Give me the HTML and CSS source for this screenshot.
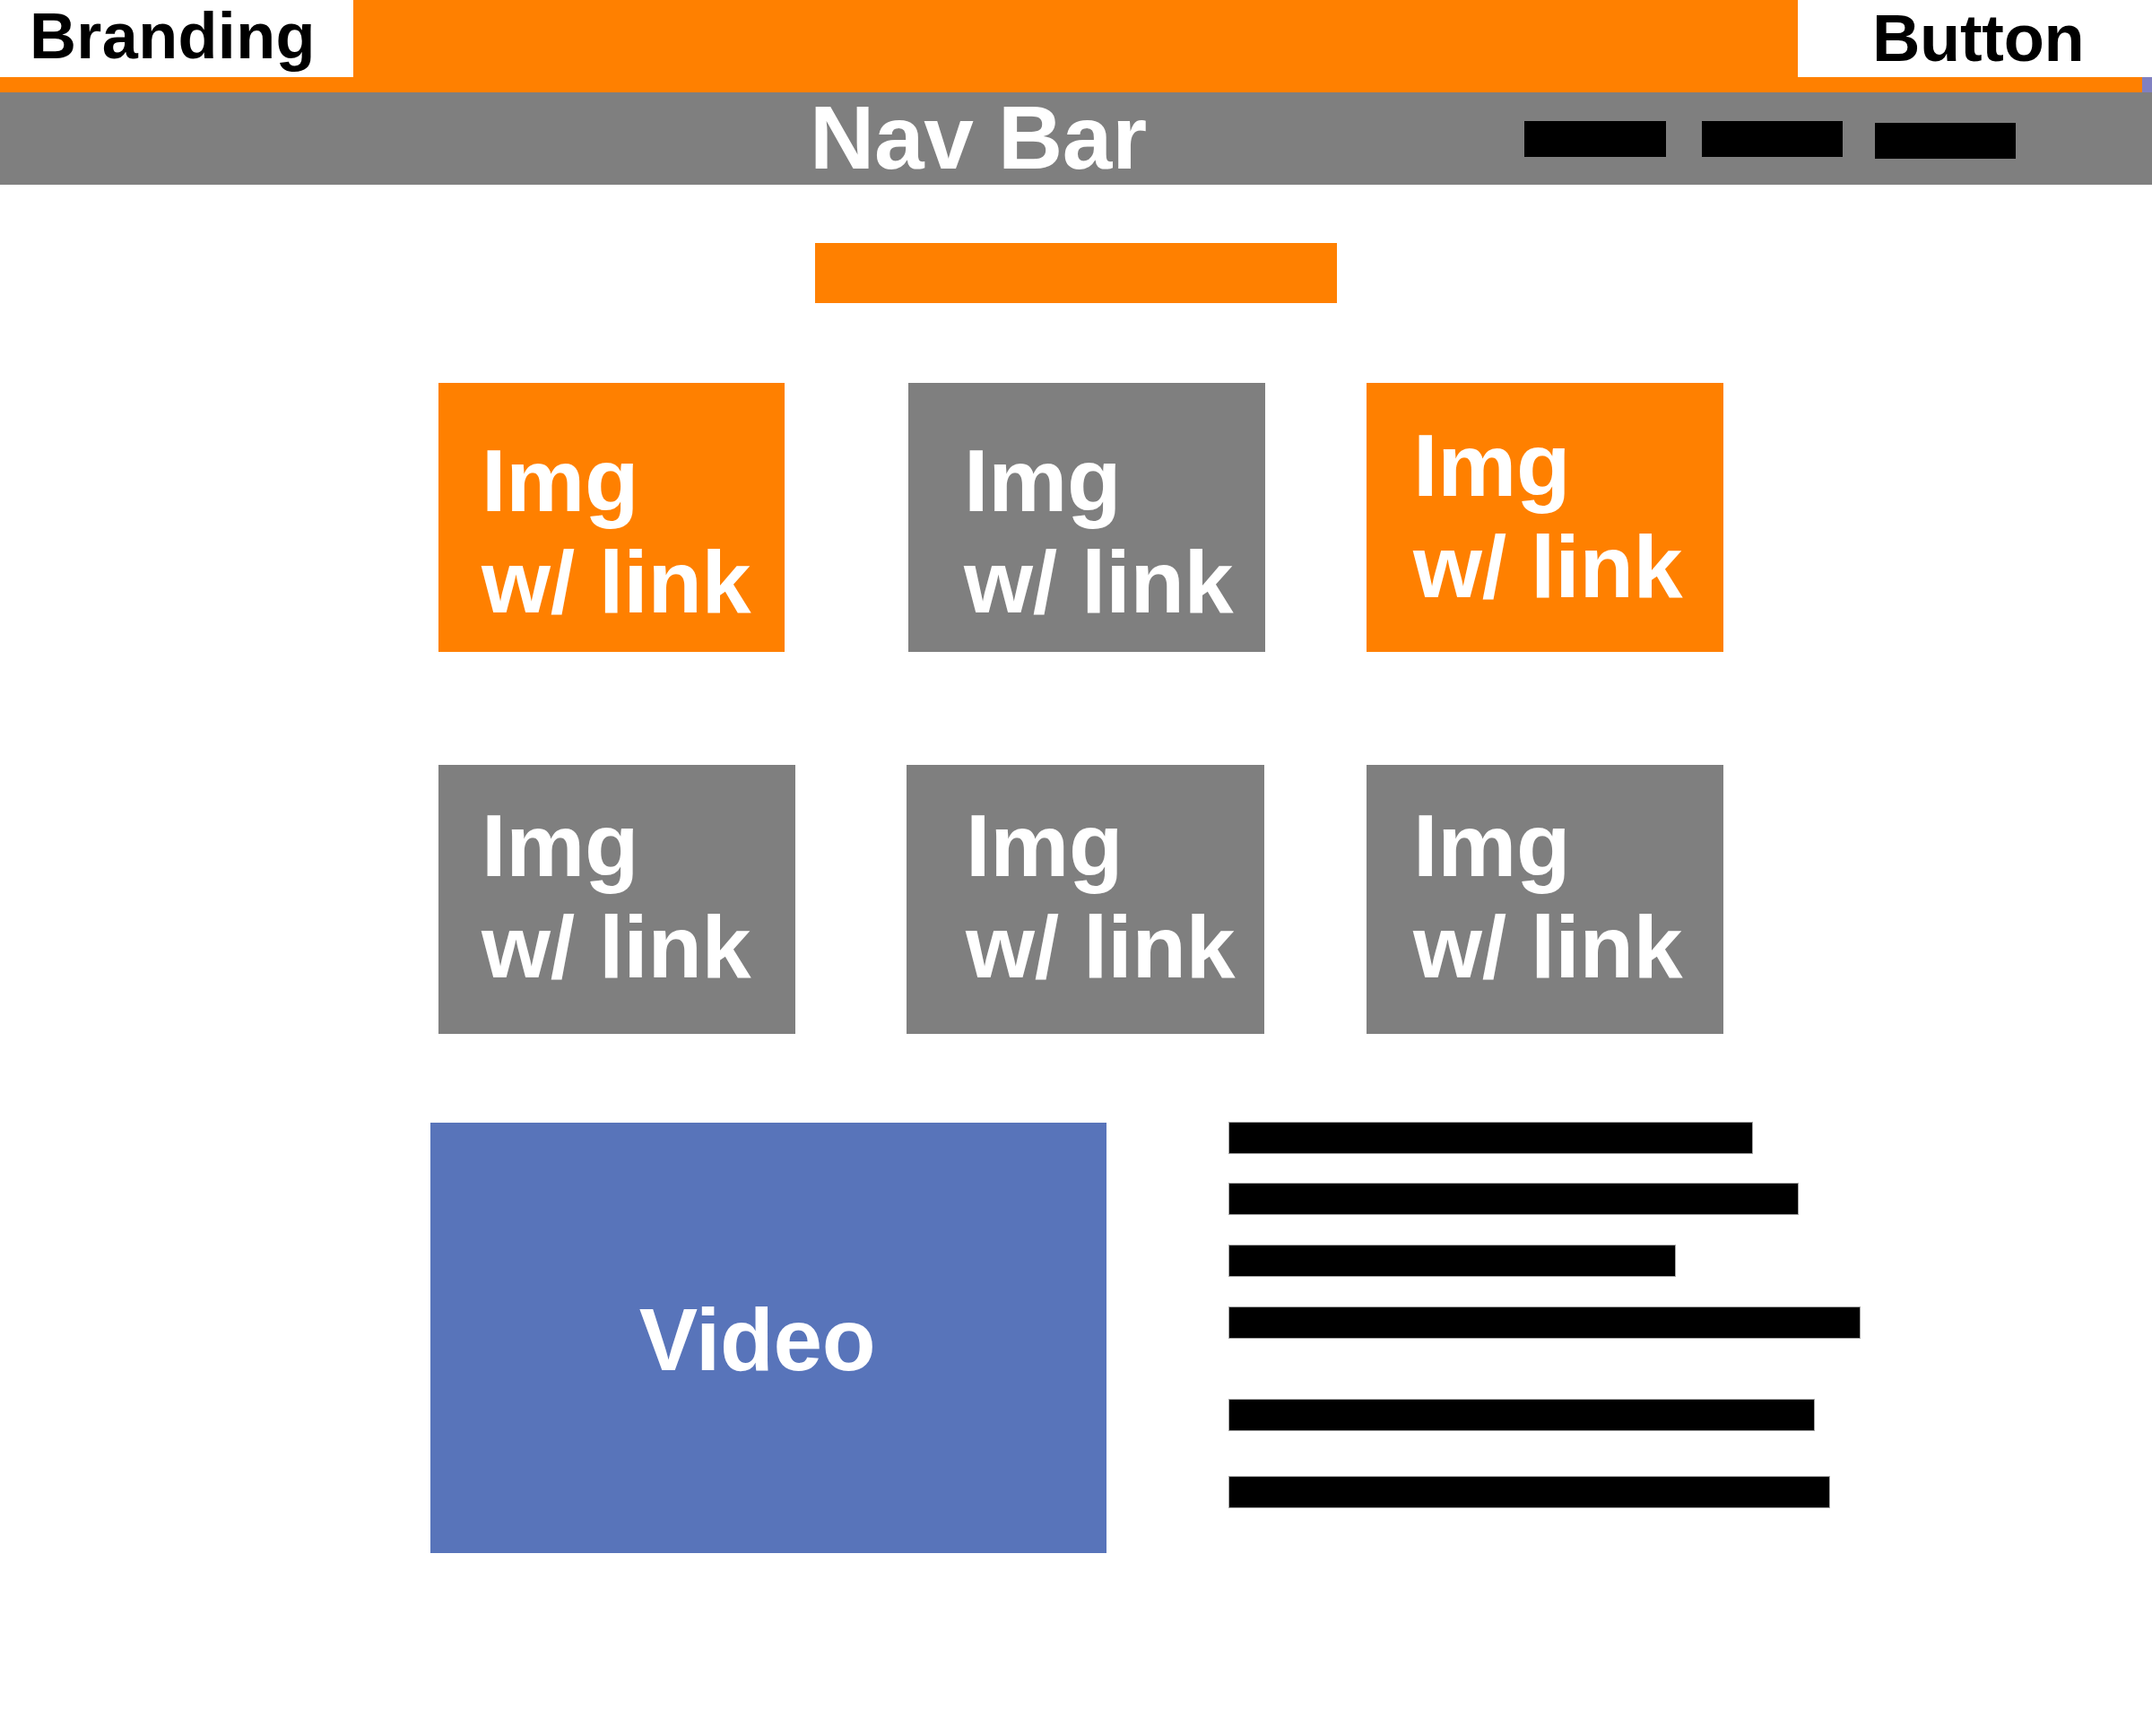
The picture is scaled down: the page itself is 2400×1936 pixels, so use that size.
FILE: index.html
```html
<!DOCTYPE html>
<html lang="en">
<head>
<meta charset="utf-8">
<title>Wireframe</title>
<link rel="stylesheet" href="styles.css">
</head>
<body>
<header class="top">
  <div class="top-row">
    <div class="brand">Branding</div>
    <div class="top-fill"></div>
    <div class="btn">Button</div>
  </div>
  <div class="strip"><div class="strip-end"></div></div>
</header>
<nav class="nav">
  <div class="nav-title">Nav Bar</div>
  <div class="nav-links">
    <span class="nav-link l1"></span>
    <span class="nav-link l2"></span>
    <span class="nav-link l3"></span>
  </div>
</nav>
<main class="main">
  <div class="hero-bar"></div>
  <div class="row row1">
    <a class="card orange c1">Img<br>w/ link</a>
    <a class="card gray c2">Img<br>w/ link</a>
    <a class="card orange c3">Img<br>w/ link</a>
  </div>
  <div class="row row2">
    <a class="card gray c4">Img<br>w/ link</a>
    <a class="card gray c5">Img<br>w/ link</a>
    <a class="card gray c6">Img<br>w/ link</a>
  </div>
  <section class="media">
    <div class="video"><span>Video</span></div>
    <div class="lines">
      <div class="line t1"></div>
      <div class="line t2"></div>
      <div class="line t3"></div>
      <div class="line t4"></div>
      <div class="line t5"></div>
      <div class="line t6"></div>
    </div>
  </section>
</main>
</body>
</html>
```
FILE: styles.css
```css
* { box-sizing: border-box; }
html, body { margin: 0; padding: 0; }
body {
  width: 2400px;
  min-height: 1936px;
  background: #ffffff;
  font-family: "Liberation Sans", Arial, sans-serif;
  font-weight: bold;
  letter-spacing: -0.02em;
  overflow: hidden;
}

/* header */
.top-row {
  display: flex;
  height: 86px;
  background: #ff8000;
}
.brand {
  width: 394px;
  background: #ffffff;
  color: #000;
  font-size: 72px;
  line-height: 1.117;
  letter-spacing: 0.005em;
  padding-left: 33px;
  white-space: nowrap;
}
.top-fill { flex: 1; }
.btn {
  width: 395px;
  background: #ffffff;
  color: #000;
  font-size: 74px;
  line-height: 74px;
  padding: 6px 0 0 83px;
  white-space: nowrap;
}
.strip {
  height: 17px;
  background: #ff8000;
  display: flex;
  justify-content: flex-end;
}
.strip-end {
  width: 11px;
  background: #8080c0;
}

/* nav */
.nav {
  display: flex;
  align-items: flex-start;
  height: 103px;
  background: #7f7f7f;
  padding-left: 903px;
}
.nav-title {
  color: #ffffff;
  font-size: 100px;
  line-height: 100px;
  white-space: nowrap;
}
.nav-links {
  display: flex;
  align-items: flex-start;
  margin-left: auto;
  padding-right: 152px;
  padding-top: 32px;
}
.nav-link {
  display: block;
  height: 40px;
  background: #000;
}
.l1 { width: 158px; }
.l2 { width: 157px; margin-left: 40px; }
.l3 { width: 157px; margin-left: 36px; margin-top: 2px; }

/* main */
.hero-bar {
  width: 582px;
  height: 67px;
  background: #ff8000;
  margin: 65px 0 0 909px;
}
.row {
  display: flex;
  padding-left: 489px;
}
.row1 { margin-top: 89px; }
.row2 { margin-top: 126px; }

.card {
  display: block;
  height: 300px;
  color: #ffffff;
  font-size: 99px;
  line-height: 113px;
  white-space: nowrap;
  text-decoration: none;
}
.orange { background: #ff8000; }
.gray { background: #7f7f7f; }
.c1 { width: 386px; padding: 52px 0 0 48px; }
.c2 { width: 398px; margin-left: 138px; padding: 52px 0 0 62px; }
.c3 { width: 398px; margin-left: 113px; padding: 35px 0 0 52px; }
.c4 { width: 398px; padding: 33px 0 0 48px; }
.c5 { width: 399px; margin-left: 124px; padding: 33px 0 0 66px; }
.c6 { width: 398px; margin-left: 114px; padding: 33px 0 0 52px; }

/* media */
.media {
  display: flex;
  align-items: flex-start;
  margin-top: 99px;
  padding-left: 480px;
}
.video {
  width: 754px;
  height: 480px;
  background: #5874ba;
  color: #ffffff;
  font-size: 98px;
  line-height: 98px;
  display: flex;
  align-items: center;
  justify-content: center;
  padding-right: 25px;
  padding-top: 4px;
}
.lines {
  display: flex;
  flex-direction: column;
  align-items: flex-start;
  margin-left: 137px;
}
.line {
  height: 34px;
  background: #000;
  box-shadow: 0 0 0 1px rgba(0, 0, 0, 0.35);
}
.t1 { width: 583px; }
.t2 { width: 634px; margin-top: 34px; }
.t3 { width: 497px; margin-top: 35px; }
.t4 { width: 703px; margin-top: 35px; }
.t5 { width: 652px; margin-top: 69px; }
.t6 { width: 669px; margin-top: 52px; }
```
